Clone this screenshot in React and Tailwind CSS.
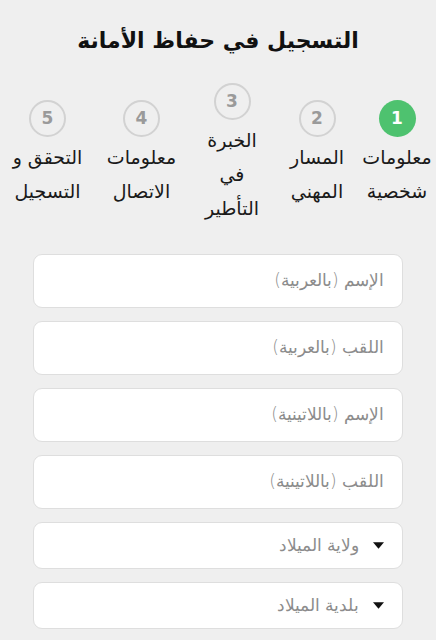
import React from "react";

const steps = [
  { n: 1, label: ["معلومات", "شخصية"], w: "w-[78px]", active: true },
  { n: 2, label: ["المسار", "المهني"], w: "w-[82px]" },
  { n: 3, label: ["الخبرة", "في", "التأطير"], w: "w-[88px]" },
  { n: 4, label: ["معلومات", "الاتصال"], w: "w-[93px]" },
  { n: 5, label: ["التحقق و", "التسجيل"], w: "w-[95px]" },
];

const fields = [
  { text: "الإسم (بالعربية)" },
  { text: "اللقب (بالعربية)" },
  { text: "الإسم (باللاتينية)" },
  { text: "اللقب (باللاتينية)" },
  { text: "ولاية الميلاد", select: true },
  { text: "بلدية الميلاد", select: true },
];

const Step = ({ step }) => (
  <div className={`${step.w} flex flex-col items-center`}>
    <div
      className={
        step.active
          ? "w-[37px] h-[37px] rounded-full bg-[#4ec26f] text-white flex items-center justify-center text-[17px] font-bold"
          : "w-[37px] h-[37px] rounded-full border-2 border-[#d2d2d2] text-[#9a9a9a] flex items-center justify-center text-[17px] font-bold"
      }
    >
      {step.n}
    </div>
    <div className="mt-[3px] text-center text-[19px] leading-[34px] text-[#1a1a1a] whitespace-nowrap">
      {step.label.map((l) => (
        <div key={l}>{l}</div>
      ))}
    </div>
  </div>
);

const Field = ({ field }) => (
  <div
    className={`${
      field.select ? "h-[47px]" : "h-[54px]"
    } bg-white border border-[#dedede] rounded-[9px] flex items-center px-[18px]`}
  >
    {field.select && (
      <svg width="11" height="7" viewBox="0 0 10 6" className="ml-[14px]">
        <path d="M0 0h10L5 6z" fill="#111" />
      </svg>
    )}
    <span className="text-[17px] text-[#8c8c8c] font-light">{field.text}</span>
  </div>
);

export default function App() {
  return (
    <div
      dir="rtl"
      className="w-[436px] h-[640px] overflow-hidden bg-[#efefef]"
      style={{ fontFamily: '"DejaVu Sans", "Noto Sans", sans-serif' }}
    >
      <h1 className="pt-[24px] text-center text-[22px] font-bold text-[#111]">
        التسجيل في حفاظ الأمانة
      </h1>
      <div className="flex items-center mt-[26px]">
        {steps.map((s) => (
          <Step key={s.n} step={s} />
        ))}
      </div>
      <div className="mt-[29px] mx-[33px] flex flex-col gap-[13px]">
        {fields.map((f) => (
          <Field key={f.text} field={f} />
        ))}
      </div>
    </div>
  );
}
